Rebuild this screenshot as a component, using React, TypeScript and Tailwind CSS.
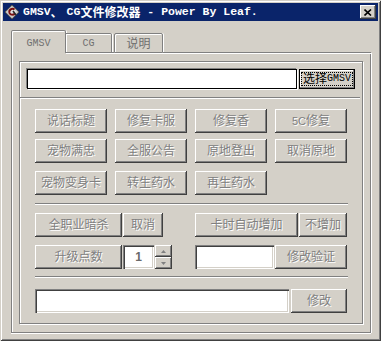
import React from 'react';

const raised =
  'shadow-[inset_-1px_-1px_0_#404040,inset_1px_1px_0_#ffffff,inset_-2px_-2px_0_#808080]';
const sunken =
  'shadow-[inset_1px_1px_0_#808080,inset_2px_2px_0_#404040,inset_-1px_-1px_0_#ffffff,inset_-2px_-2px_0_#d4d0c8]';
const cjk = "font-['Liberation_Sans','Noto_Sans_CJK_SC',sans-serif]";

interface BtnProps {
  className: string;
  children: React.ReactNode;
}

// disabled classic push button
const Btn: React.FC<BtnProps> = ({ className, children }) => (
  <div
    className={`flex items-center justify-center whitespace-nowrap bg-[#d4d0c8] text-[12px] leading-none text-[#808080] [text-shadow:1px_1px_0_#ffffff] ${raised} ${className}`}
  >
    {children}
  </div>
);

const Edit: React.FC<{ className: string; children?: React.ReactNode }> = ({ className, children }) => (
  <div className={`bg-white ${sunken} ${className}`}>{children}</div>
);

const Sep: React.FC<{ className: string }> = ({ className }) => (
  <div className={`h-[2px] border-t border-[#808080] border-b border-b-white ${className}`} />
);

const AppIcon = () => (
  <svg width="16" height="16" viewBox="0 0 16 16">
    <path d="M8 1 L15 8 L8 15 L1 8 Z" fill="#b8b8b8" stroke="#555" strokeWidth="1" />
    <path d="M8 3 L13 8 L8 13 L3 8 Z" fill="#e2e2e2" />
    <path d="M10.5 5.5 C8 3.5 4.5 6 5.5 9 C6.5 11.5 9.5 11 11 9.5" fill="none" stroke="#7a1010" strokeWidth="2" />
    <path d="M9 7 L12 11" stroke="#2a2a2a" strokeWidth="1.5" />
  </svg>
);

export default function App() {
  return (
    <div className="w-[381px] h-[341px] bg-[#d4d0c8] shadow-[inset_1px_1px_0_#d4d0c8,inset_-1px_-1px_0_#404040,inset_2px_2px_0_#ffffff,inset_-2px_-2px_0_#808080] pt-[3px] px-[3px] flex flex-col overflow-hidden">
      {/* title bar */}
      <div className="h-[18px] bg-[#0a246a] flex items-center pl-[1px] pr-[2px]">
        <AppIcon />
        <div className="ml-[3px] flex-1 flex items-center text-white font-bold whitespace-pre leading-none">
          <span className="font-['Liberation_Mono',monospace] text-[11.5px]">GMSV</span>
          <span className="font-['Noto_Sans_CJK_SC',sans-serif] text-[12px] w-[16px]">、</span>
          <span className="font-['Liberation_Mono',monospace] text-[11.5px]">CG</span>
          <span className="font-['Noto_Sans_CJK_SC',sans-serif] text-[12px]">文件修改器</span>
          <span className="font-['Liberation_Mono',monospace] text-[11.5px]"> - Power By Leaf.</span>
        </div>
        <div className={`w-[16px] h-[14px] bg-[#d4d0c8] flex items-center justify-center ${raised}`}>
          <svg width="8" height="7" viewBox="0 0 8 7">
            <path d="M0.5 0.5 L7 6.5 M7 0.5 L0.5 6.5" stroke="#000" strokeWidth="1.6" />
          </svg>
        </div>
      </div>

      {/* tabs */}
      <div className="ml-[8px] mt-[9px] w-[360px]">
        <div className={`flex items-end h-[23px] ${cjk} text-[#6f6f6f]`}>
          <div className="w-[55px] h-[23px] border-l border-t border-r border-[#808080] rounded-t-[2px] shadow-[inset_1px_1px_0_#ffffff,1px_0_0_#ffffff] flex items-center justify-center pt-[3px] font-['Liberation_Mono',monospace] text-[10px]">
            GMSV
          </div>
          <div className="w-[46px] h-[20px] border-t border-r border-b border-[#808080] rounded-tr-[2px] shadow-[inset_0_1px_0_#ffffff,0_1px_0_#ffffff,1px_0_0_#ffffff] flex items-center justify-center pt-[1px] font-['Liberation_Mono',monospace] text-[10px]">
            CG
          </div>
          <div className="w-[2px] h-[1px] border-b border-[#808080] shadow-[0_1px_0_#ffffff]" />
          <div className="w-[49px] h-[20px] border border-[#808080] rounded-t-[2px] shadow-[inset_1px_1px_0_#ffffff,0_1px_0_#ffffff,1px_0_0_#ffffff] flex items-center justify-center pt-[1px] text-[12px]">
            说明
          </div>
          <div className="flex-1 h-[1px] border-b border-[#808080] shadow-[0_1px_0_#ffffff]" />
        </div>

        {/* tab page */}
        <div className="w-[360px] h-[280px] border-l border-r border-b border-[#808080] shadow-[inset_1px_0_0_#ffffff,1px_0_0_#ffffff,0_1px_0_#ffffff] pt-[8px] pl-[7px]">
          <div className={`w-[344px] h-[263px] border border-[#808080] shadow-[inset_1px_1px_0_#ffffff,1px_1px_0_#ffffff] ${cjk}`}>
            <div className="mt-[7px] ml-[7px] flex">
              <div className="w-[270px] h-[20px] bg-white border border-black shadow-[-1px_-1px_0_#808080,1px_1px_0_#ffffff]" />
              <div className="ml-[2px] w-[56px] h-[20px] border border-black bg-[#d4d0c8] shadow-[inset_-1px_-1px_0_#808080,inset_1px_1px_0_#ffffff] py-[2px] px-[1px]">
                <div className="w-full h-full border border-dotted border-black flex items-center justify-center whitespace-nowrap text-[12px] leading-none text-black">
                  选择<span className="font-['Liberation_Mono',monospace] text-[10px]">GMSV</span>
                </div>
              </div>
            </div>

            <Sep className="mt-[8px] w-[340px]" />

            <div className="mt-[10px] ml-[15px] grid grid-cols-[72px_72px_72px_72px] gap-x-[8px]">
              <Btn className="h-[24px]">说话标题</Btn>
              <Btn className="h-[24px]">修复卡服</Btn>
              <Btn className="h-[24px]">修复香</Btn>
              <Btn className="h-[24px]"><span className="text-[11px]">5C</span>修复</Btn>
              <Btn className="h-[24px] mt-[6px]">宠物满忠</Btn>
              <Btn className="h-[24px] mt-[6px]">全服公告</Btn>
              <Btn className="h-[24px] mt-[6px]">原地登出</Btn>
              <Btn className="h-[24px] mt-[6px]">取消原地</Btn>
              <Btn className="h-[24px] mt-[8px]">宠物变身卡</Btn>
              <Btn className="h-[24px] mt-[8px]">转生药水</Btn>
              <Btn className="h-[24px] mt-[8px]">再生药水</Btn>
            </div>

            <Sep className="mt-[8px] ml-[15px] w-[313px]" />

            <div className="mt-[8px] ml-[15px] flex">
              <Btn className="w-[87px] h-[24px]">全职业暗杀</Btn>
              <Btn className="ml-[1px] w-[40px] h-[24px]">取消</Btn>
              <Btn className="ml-[32px] w-[103px] h-[24px]">卡时自动增加</Btn>
              <Btn className="ml-[1px] w-[48px] h-[24px]">不增加</Btn>
            </div>

            <div className="mt-[8px] ml-[15px] flex">
              <Btn className="w-[87px] h-[24px]">升级点数</Btn>
              <Edit className="ml-[1px] w-[31px] h-[24px] flex items-center justify-center">
                <span className="font-['Liberation_Sans',sans-serif] font-bold text-[12px] text-[#6a6a6a]">1</span>
              </Edit>
              <div className="ml-[1px] w-[17px] h-[24px] flex flex-col">
                <div className={`h-[12px] bg-[#d4d0c8] flex items-center justify-center ${raised}`}>
                  <svg width="5" height="3" viewBox="0 0 5 3"><path d="M2.5 0 L5 3 L0 3 Z" fill="#808080" /></svg>
                </div>
                <div className={`h-[12px] bg-[#d4d0c8] flex items-center justify-center ${raised}`}>
                  <svg width="5" height="3" viewBox="0 0 5 3"><path d="M0 0 L5 0 L2.5 3 Z" fill="#808080" /></svg>
                </div>
              </div>
              <Edit className="ml-[23px] w-[79px] h-[24px]" />
              <Btn className="ml-[1px] w-[72px] h-[24px]">修改验证</Btn>
            </div>

            <Sep className="mt-[7px] ml-[15px] w-[313px]" />

            <div className="mt-[11px] ml-[15px] flex">
              <Edit className="w-[254px] h-[24px]" />
              <Btn className="ml-[2px] w-[56px] h-[24px]">修改</Btn>
            </div>
          </div>
        </div>
      </div>
    </div>
  );
}
